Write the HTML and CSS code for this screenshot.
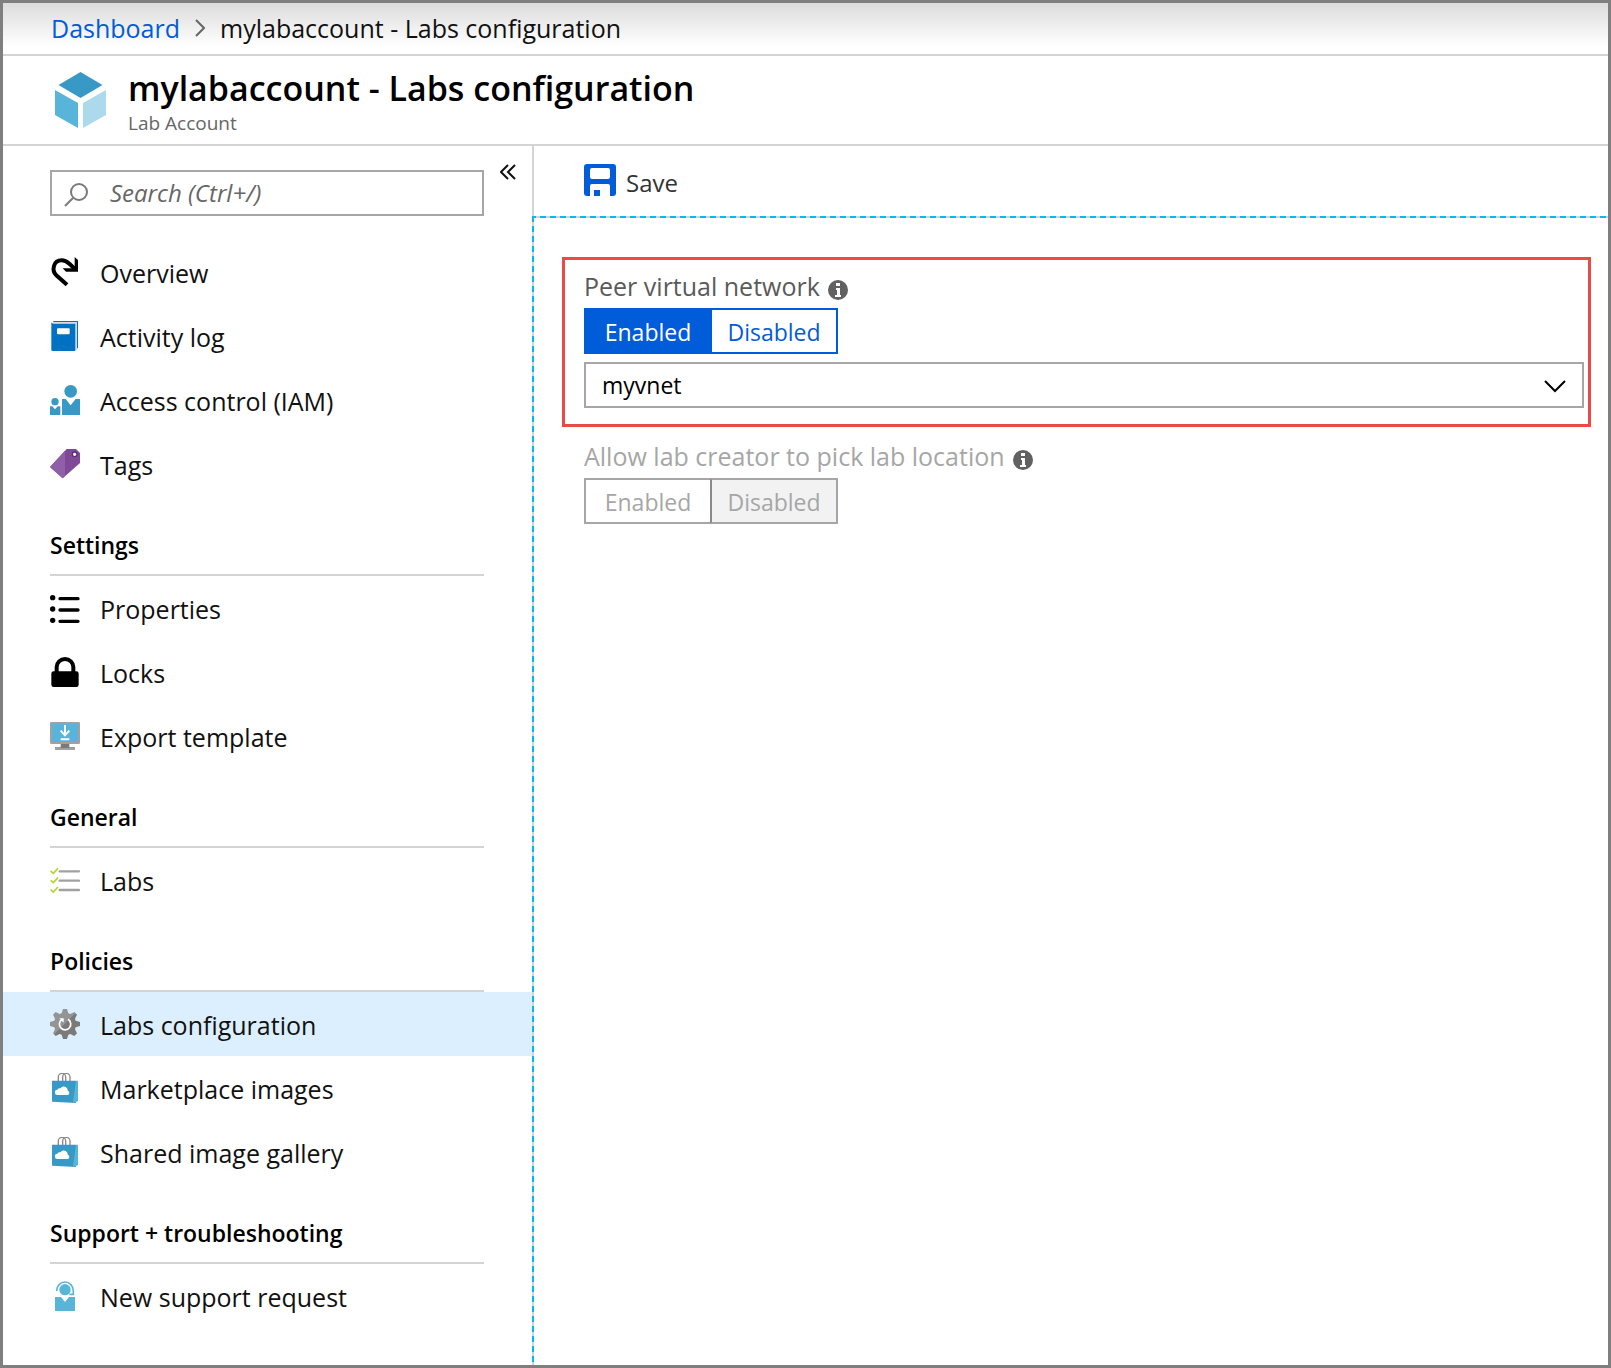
FILE: index.html
```html
<!DOCTYPE html>
<html lang="en">
<head>
<meta charset="utf-8">
<meta name="viewport" content="width=device-width, initial-scale=1">
<title>mylabaccount - Labs configuration</title>
<link rel="stylesheet" href="styles.css">
</head>
<body>
<svg class="defs" width="0" height="0" aria-hidden="true">
  <symbol id="bag" viewBox="0 0 90 90">
    <path d="M25 26V12a11 11 0 0 1 22 0v14M38 26V12a11 11 0 0 1 22 0v14" fill="none" stroke="#8a8a8a" stroke-width="4"/>
    <path d="M6 23h72v67L6 86z" fill="#3999c6"/>
    <path d="M78 23h6v61l-12 6-3-1z" fill="#59b4d9"/>
    <path d="M23 66a8 8 0 0 1-1-16 9 9 0 0 1 9-4 12 12 0 0 1 22 7 7 7 0 0 1 1 13z" fill="#fff"/>
  </symbol>
  <symbol id="info" viewBox="0 0 20 20">
    <circle cx="10" cy="10" r="10" fill="#616161"/>
    <path d="M8 3h4v3H8zM8 8h4v7h1v2H7v-2h2v-5H8z" fill="#fff"/>
  </symbol>
</svg>
<div class="portal">
  <nav class="breadcrumb" aria-label="Breadcrumb">
    <a href="#">Dashboard</a>
    <svg width="10" height="18" viewBox="0 0 10 18" aria-hidden="true"><path d="M1 1l8 8-8 8" fill="none" stroke="#666" stroke-width="2"/></svg>
    <span>mylabaccount - Labs configuration</span>
  </nav>
  <header class="heading">
    <svg width="51" height="56" viewBox="0 0 51 56" aria-hidden="true">
      <path d="M25.500 0l22 13-22 13-22-13z" fill="#3999c6"/>
      <path d="M0 18l23 13v25L0 43z" fill="#59b4d9"/>
      <path d="M51 18L28 31v25l23-13z" fill="#acd9ec"/>
    </svg>
    <div>
      <h1>mylabaccount - Labs configuration</h1>
      <p>Lab Account</p>
    </div>
  </header>
  <div class="body">
    <aside class="sidebar">
      <div class="search-row">
        <label class="search">
          <svg width="24" height="28" viewBox="0 0 24 28" aria-hidden="true"><circle cx="15" cy="13" r="8" fill="none" stroke="#7a7a7a" stroke-width="2"/><path d="M9 19l-8 8" stroke="#7a7a7a" stroke-width="2"/></svg>
          <input type="text" placeholder="Search (Ctrl+/)" aria-label="Search">
        </label>
        <button class="collapse" aria-label="Collapse menu">
          <svg width="16" height="16" viewBox="0 0 16 16" aria-hidden="true"><path d="M8 1L1 8l7 7M15 1L8 8l7 7" fill="none" stroke="#111" stroke-width="2"/></svg>
        </button>
      </div>
      <nav aria-label="Lab account">
        <a class="item" href="#">
          <svg viewBox="0 0 90 90" aria-hidden="true"><path d="M51 83L19 55C4 40 10 10 35 10c11 0 17 5 24 11l18 17" fill="none" stroke="#000" stroke-width="12"/><path d="M74 0l10 9v35H48L38 34h36z"/></svg>
          <span>Overview</span></a>
        <a class="item" href="#">
          <svg viewBox="0 0 90 90" aria-hidden="true"><path d="M10 0h74v80l-6 6V6H10z" fill="#0072c6"/><path d="M10 3h71v80l-5 4V8H6z" fill="#d5dbe2"/><path d="M4 4q2 4 6 4h66v82H8q-4 0-4-4z" fill="#0072c6"/><rect x="21" y="22" width="38" height="18" rx="3" fill="#fff"/></svg>
          <span>Activity log</span></a>
        <a class="item" href="#">
          <svg viewBox="0 0 90 90" aria-hidden="true"><g fill="#3999c6"><circle cx="62" cy="19" r="19"/><path d="M36 42h11l15 19 15-19h13v48H36z"/><circle cx="15" cy="50" r="11"/><path d="M0 64h7l8 9 8-9h8v26H0z"/></g></svg>
          <span>Access control (IAM)</span></a>
        <a class="item" href="#">
          <svg viewBox="0 0 90 90" aria-hidden="true"><path d="M0 54L50 0h28l12 12v30L38 88z" fill="#804998"/><path d="M0 54L45 5v77l-7 6z" fill="#8f5fa8"/><circle cx="74" cy="16" r="7" fill="#fff" stroke="#5c2d78" stroke-width="4"/></svg>
          <span>Tags</span></a>
        <h2>Settings</h2>
        <a class="item" href="#">
          <svg viewBox="0 0 90 90" aria-hidden="true"><circle cx="8" cy="14" r="8"/><circle cx="8" cy="48" r="8"/><circle cx="8" cy="82" r="8"/><path d="M30 17h54M30 51h54M30 85h54" stroke="#000" stroke-width="10" stroke-linecap="round"/></svg>
          <span>Properties</span></a>
        <a class="item" href="#">
          <svg viewBox="0 0 90 90" aria-hidden="true"><rect x="4" y="43" width="82" height="47" rx="7"/><path d="M20 48V30a25 24 0 0 1 50 0v18" fill="none" stroke="#000" stroke-width="12"/></svg>
          <span>Locks</span></a>
        <a class="item" href="#">
          <svg viewBox="0 0 90 90" aria-hidden="true"><rect y="3" width="90" height="66" rx="4" fill="#a0a1a2"/><path d="M6 9h78v54H6z" fill="#59b4d9"/><path d="M32 69h26v10h17v8H15v-8h17z" fill="#7a7a7a"/><path d="M15 81h60v6H15z" fill="#a0a1a2"/><path d="M45 12v30M32 29l13 14 13-14M32 55h26" fill="none" stroke="#fff" stroke-width="6"/></svg>
          <span>Export template</span></a>
        <h2>General</h2>
        <a class="item" href="#">
          <svg viewBox="0 0 90 90" aria-hidden="true"><path d="M29 19h58M29 47h58M29 75h58" stroke="#a0a1a2" stroke-width="7" stroke-linecap="round"/><path d="M2 18l8 7L24 10M2 46l8 7 14-15M2 74l8 7 14-15" fill="none" stroke="#b8d432" stroke-width="5"/></svg>
          <span>Labs</span></a>
        <h2>Policies</h2>
        <a class="item selected" href="#" aria-current="page">
          <svg viewBox="0 0 90 90" aria-hidden="true">
            <defs><linearGradient id="steel" gradientUnits="userSpaceOnUse" x1="15" y1="15" x2="75" y2="75"><stop offset=".5" stop-color="#949494"/><stop offset=".5" stop-color="#7a7a7a"/></linearGradient></defs>
            <path d="M35 13L39 0H51L55 13L61 15L73 9L81 17L75 29L77 35L90 39V51L77 55L75 61L81 73L73 81L61 75L55 77L51 90H39L35 77L29 75L17 81L9 73L15 61L13 55L0 51V39L13 35L15 29L9 17L17 9L29 15z" fill="url(#steel)"/>
            <path d="M54 31a17 17 0 1 1-19 1" fill="none" stroke="#fff" stroke-width="5"/><path d="M28 28h13v13z" fill="#fff"/></svg>
          <span>Labs configuration</span></a>
        <a class="item" href="#"><svg aria-hidden="true"><use href="#bag"/></svg><span>Marketplace images</span></a>
        <a class="item" href="#"><svg aria-hidden="true"><use href="#bag"/></svg><span>Shared image gallery</span></a>
        <h2>Support + troubleshooting</h2>
        <a class="item" href="#">
          <svg viewBox="0 0 90 90" aria-hidden="true"><g fill="#59b4d9"><circle cx="45" cy="26" r="17"/><path d="M15 48h18l12 15 12-15h18v42H15z"/></g><path d="M20 30a25 27 0 1 1 50 0v10H58" fill="none" stroke="#59b4d9" stroke-width="5"/></svg>
          <span>New support request</span></a>
      </nav>
    </aside>
    <main class="main">
      <div class="toolbar">
        <button class="save">
          <svg width="32" height="32" viewBox="0 0 32 32" aria-hidden="true"><path d="M3 0h26q3 0 3 3v26q0 3-3 3h-3V22q0-2-2-2H8q-2 0-2 2v10H3q-3 0-3-3V3q0-3 3-3z" fill="#015cda"/><rect x="6" y="4" width="20" height="11" rx="2" fill="#fff"/><path d="M10 26h6v6h-6z" fill="#015cda"/></svg>
          <span>Save</span>
        </button>
      </div>
      <form class="panel">
        <section class="group highlight">
          <div class="caption"><span id="peer">Peer virtual network</span><svg width="20" height="20" aria-hidden="true"><use href="#info"/></svg></div>
          <div class="toggle" role="radiogroup" aria-labelledby="peer">
            <label><input type="radio" name="peer" checked><span>Enabled</span></label>
            <label><input type="radio" name="peer"><span>Disabled</span></label>
          </div>
          <div class="dropdown">
            <select aria-label="Virtual network"><option>myvnet</option></select>
            <svg width="22" height="13" viewBox="0 0 22 13" aria-hidden="true"><path d="M1 1l10 10L21 1" fill="none" stroke="#000" stroke-width="2"/></svg>
          </div>
        </section>
        <section class="group disabled">
          <div class="caption"><span id="location">Allow lab creator to pick lab location</span><svg width="20" height="20" aria-hidden="true"><use href="#info"/></svg></div>
          <div class="toggle" role="radiogroup" aria-labelledby="location">
            <label><input type="radio" name="location" disabled><span>Enabled</span></label>
            <label><input type="radio" name="location" checked disabled><span>Disabled</span></label>
          </div>
        </section>
      </form>
    </main>
  </div>
</div>
</body>
</html>
```
FILE: styles.css
```css
* { box-sizing: border-box; }

body {
  margin: 0;
  background: #fff;
  color: #111;
  font: 25px/32px "Open Sans", "Noto Sans", sans-serif;
}

h1, h2, p { margin: 0; }
a { color: inherit; text-decoration: none; }
svg { display: block; flex: none; }
button, input, select { font: inherit; color: inherit; }

button {
  padding: 0;
  border: 0;
  background: none;
  cursor: pointer;
}

.defs { position: absolute; }

.portal {
  display: flex;
  flex-direction: column;
  min-height: 100vh;
  border: 3px solid #7f7f7f;
}

.breadcrumb {
  display: flex;
  align-items: center;
  gap: 15px;
  height: 53px;
  padding: 0 0 2px 48px;
  border-bottom: 2px solid #d4d4d4;
  background: linear-gradient(#dcdcdc, #fff 85%);
}
.breadcrumb a { color: #015cda; }

.heading {
  display: flex;
  gap: 22px;
  height: 90px;
  padding: 16px 0 0 52px;
  border-bottom: 2px solid #d4d4d4;
}
.heading h1 {
  color: #000;
  font-size: 34px;
  font-weight: 600;
  line-height: 32px;
}
.heading p {
  color: #666;
  font-size: 19px;
  line-height: 38px;
}

.body {
  display: flex;
  flex: 1;
}

.sidebar {
  flex: none;
  width: 529px;
}

.search-row {
  display: flex;
  align-items: flex-start;
  gap: 16px;
  padding: 24px 16px 24px 47px;
}
.search {
  display: flex;
  flex: 1;
  align-items: center;
  gap: 22px;
  height: 46px;
  padding-left: 12px;
  border: 2px solid #a6a6a6;
}
.search input {
  width: 100%;
  padding: 0;
  border: 0;
  outline: 0;
  background: none;
  font-size: 24px;
}
.search input::placeholder {
  color: #666;
  font-style: italic;
}
.collapse {
  flex: none;
  margin-top: -6px;
}

.sidebar h2 {
  height: 80px;
  margin: 0 48px 0 47px;
  padding-top: 33px;
  border-bottom: 2px solid #d4d4d4;
  color: #000;
  font-size: 23px;
  font-weight: 600;
}
.item {
  display: flex;
  align-items: center;
  gap: 20px;
  height: 64px;
  padding-left: 47px;
}
.item svg { width: 30px; height: 30px; }
.item span { padding-top: 2px; }
.item.selected { background: #dcefff; }

.main {
  display: flex;
  flex: 1;
  flex-direction: column;
}

.toolbar {
  height: 70px;
  padding: 18px 0 0 50px;
  border-left: 2px solid #d4d4d4;
}
.save {
  display: flex;
  gap: 10px;
  color: #333;
  font-size: 24px;
}
.save span { padding-top: 3px; }

/* Dashed guide lines along the top and left edges */
.panel {
  flex: 1;
  padding: 41px 17px 0 30px;
  background:
    repeating-linear-gradient(90deg, #00bcf2 0 4px, #d4d4d4 4px 8px, #00bcf2 8px 10px) top / 100% 2px no-repeat,
    repeating-linear-gradient(#00bcf2 0 6px, #d4d4d4 6px 10px) left / 2px 100% no-repeat;
}

.group { padding: 8px 4px 16px 19px; border: 3px solid transparent; }
.highlight { border-color: #ea4b46; }

.caption {
  display: flex;
  align-items: center;
  gap: 8px;
  height: 40px;
  padding-top: 3px;
  color: #5a5a5a;
}
.caption span { padding-bottom: 7px; }

.toggle { display: flex; }
.toggle label { position: relative; }
.toggle input {
  position: absolute;
  inset: 0;
  margin: 0;
  opacity: 0;
}
.toggle span {
  display: block;
  width: 128px;
  height: 46px;
  border: 2px solid #015cda;
  color: #015cda;
  font-size: 23px;
  line-height: 44px;
  text-align: center;
}
.toggle label + label { margin-left: -2px; }
.toggle input:checked + span {
  background: #015cda;
  color: #fff;
}

.dropdown {
  position: relative;
  margin-top: 8px;
}
.dropdown select {
  display: block;
  width: 100%;
  height: 46px;
  padding: 0 16px;
  border: 2px solid #a6a6a6;
  border-radius: 0;
  background: #fff;
  color: #000;
  font-size: 23px;
  appearance: none;
}
.dropdown svg {
  position: absolute;
  top: 18px;
  right: 18px;
  pointer-events: none;
}

.disabled .caption { color: #a6a6a6; }
.disabled .toggle span {
  border-color: #a6a6a6;
  color: #a6a6a6;
}
.disabled .toggle input:checked + span {
  border-left-color: #8a8a8a;
  background: #f2f2f2;
  color: #a6a6a6;
}
```
